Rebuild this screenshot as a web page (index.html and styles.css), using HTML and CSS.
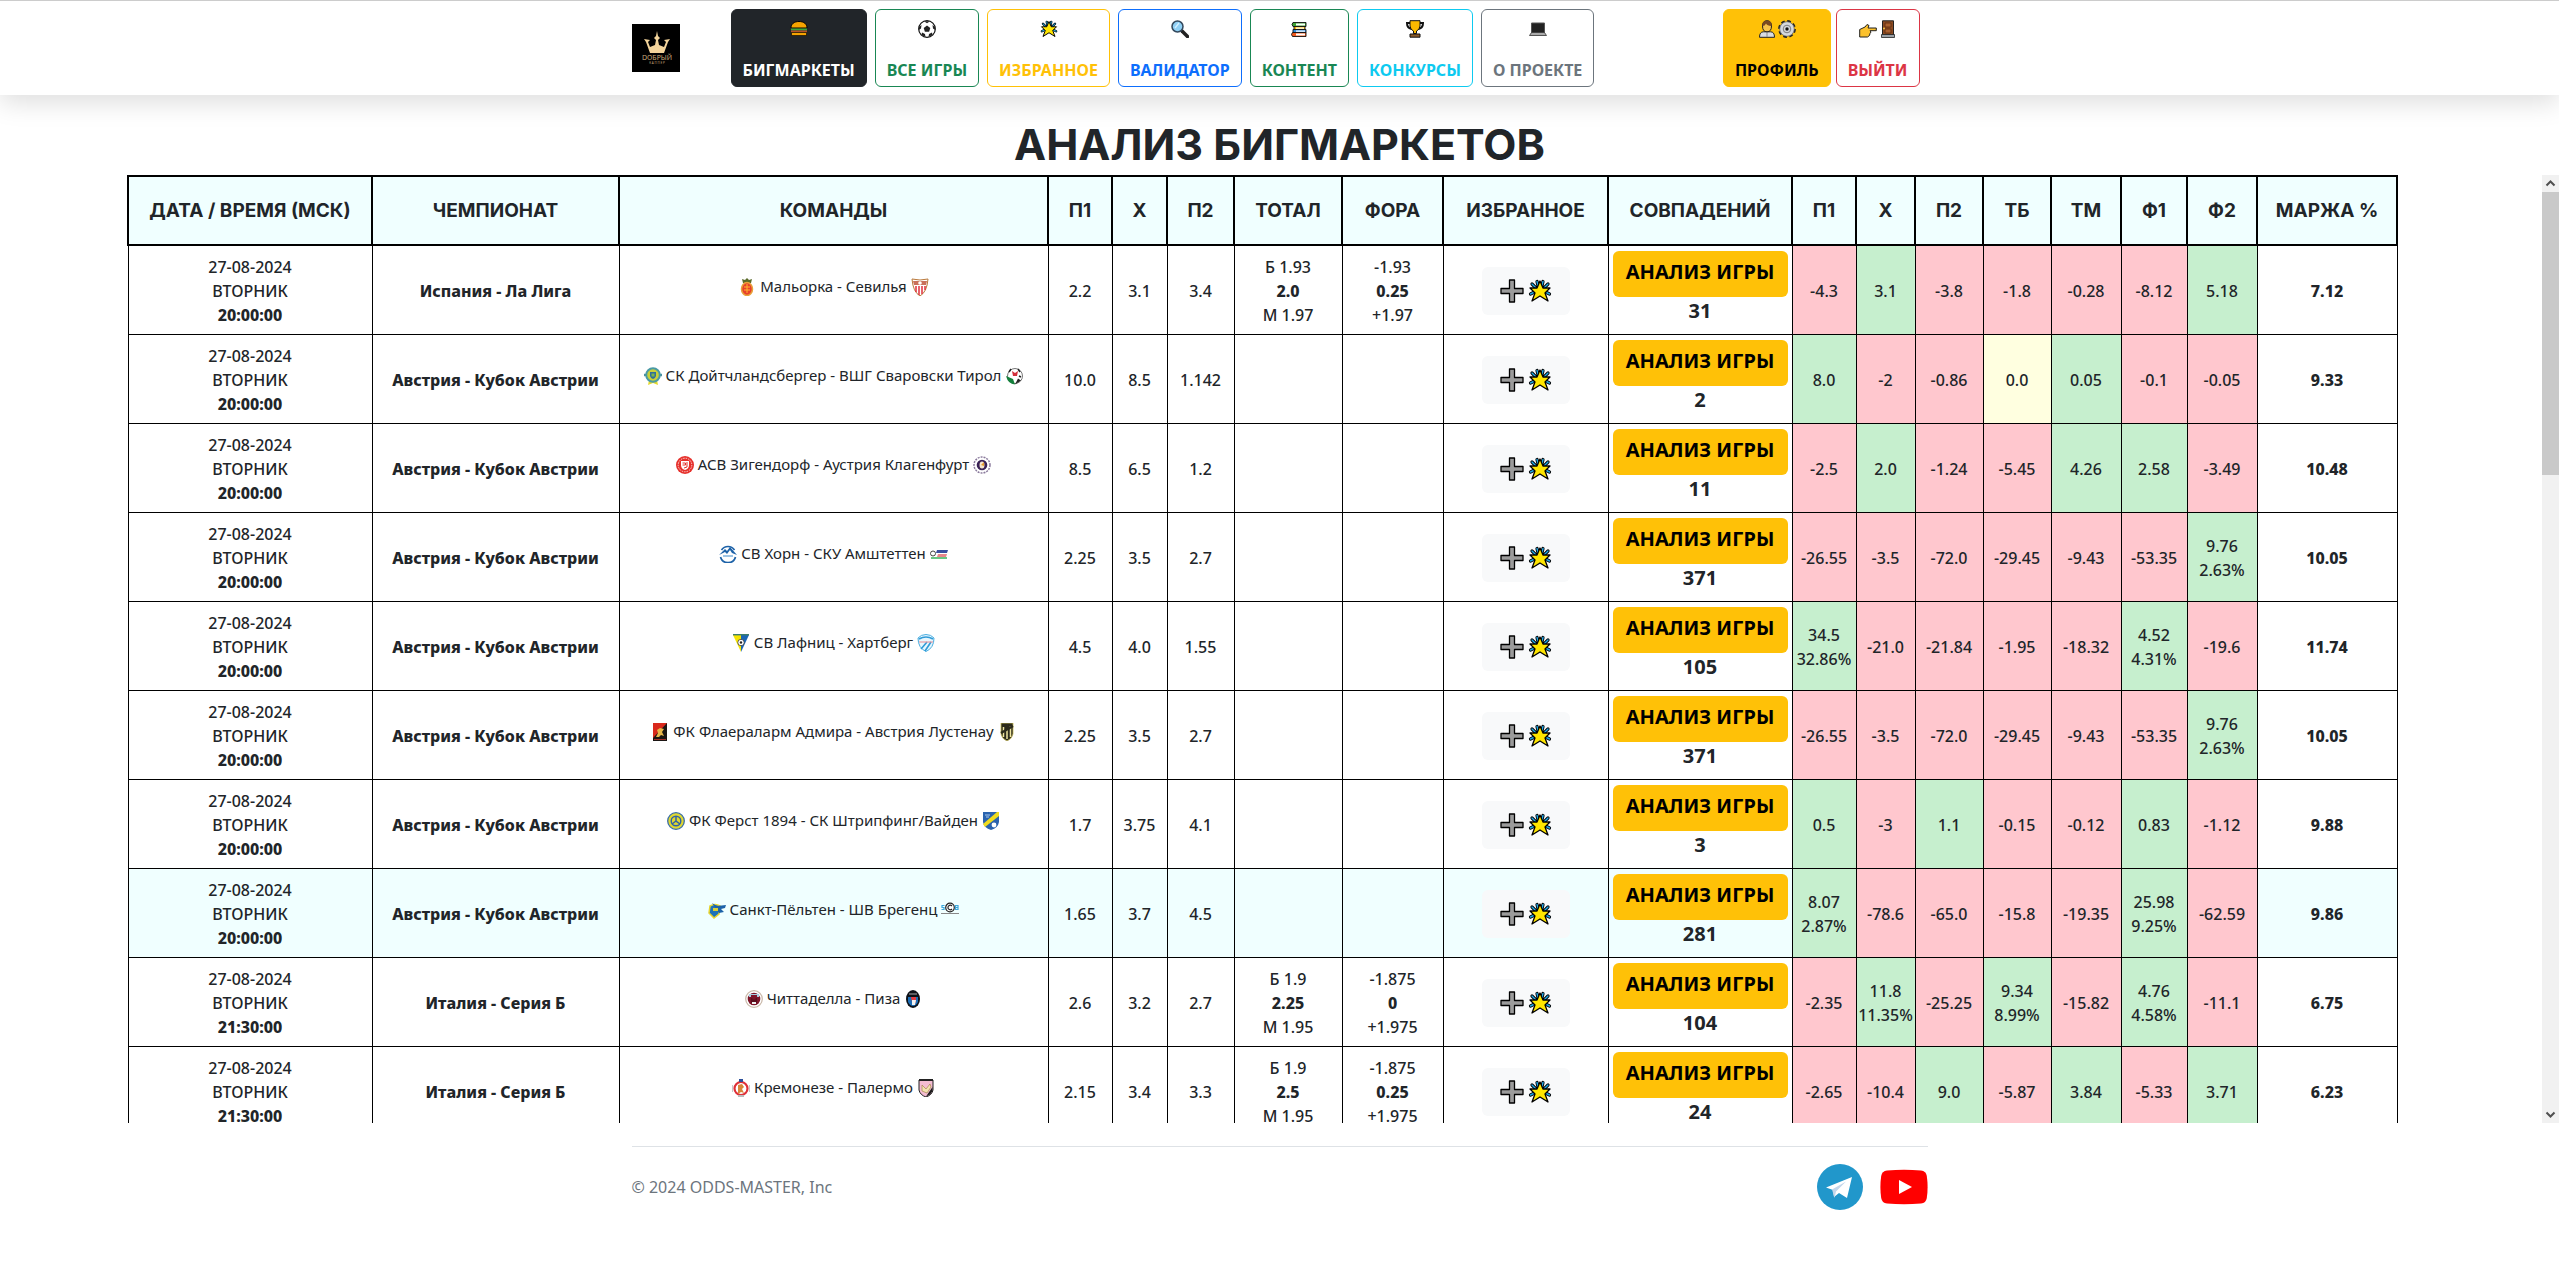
FILE: index.html
```html
<!DOCTYPE html>
<html lang="ru">
<head>
    <meta charset="utf-8">
    <meta name="viewport" content="width=device-width, initial-scale=1">
    <title>Анализ бигмаркетов</title>
    <link rel="stylesheet" href="styles.css">
</head>
<body>
    <svg class="sprite" aria-hidden="true">
        <symbol id="star" viewBox="0 0 24 24">
            <path d="M4 5l4 4M20 5l-4 4M2.500 15l4-2M21.500 15l-4-2M9 2.500l1 4M15 2.500l-1 4" stroke="#000" stroke-width="3.200" stroke-linecap="round"/>
            <path d="M4 5l4 4M20 5l-4 4M2.500 15l4-2M21.500 15l-4-2M9 2.500l1 4M15 2.500l-1 4" stroke="#1fa8e8" stroke-width="1.400" stroke-linecap="round"/>
            <path d="M12 2l3 7h7l-5 5 3 8-8-5-8 5 3-8-5-5h7z" fill="#ffe600" stroke="#000" stroke-width="1.300" stroke-linejoin="round"/>
        </symbol>
        <symbol id="plus" viewBox="0 0 24 24">
            <path d="M9.500 1h5v8.500H23v5h-8.500V23h-5v-8.500H1v-5h8.500z" fill="#9b9b9b" stroke="#000" stroke-width="1.300" stroke-linejoin="round"/>
        </symbol>
    </svg>

    <header class="header">
        <div class="container header-row">
            <a class="logo" href="#" title="Добрый каппер">
                <svg viewBox="0 0 48 48" width="48" height="48">
                    <rect width="48" height="48" fill="#000"/>
                    <g fill="#f3d49b">
                        <path d="M25 7l1 5 2 2-2 2 1 5 5 2 2-5-2-2 6-1-2 3-4 11H18l-4-11-2-3 6 1-2 2 2 5 5-2 1-5-2-2 2-2z"/>
                        <path d="M18 26h14v3H18z"/>
                    </g>
                    <text x="25" y="36" class="logo-name">DОБРЫЙ</text>
                    <text x="25" y="40" class="logo-sub">К А П П Е Р</text>
                </svg>
            </a>
            <nav class="nav">
                <a class="btn btn-dark" href="#">
                    <svg class="icon" viewBox="0 0 18 18"><path d="M1 8c0-4 3-6.500 8-6.500S17 4 17 8z" fill="#f5a300" stroke="#000"/><path d="M1 8.500h16v2H1z" fill="#3fa535"/><path d="M1 10.500h16v2H1z" fill="#b5512a"/><path d="M1.500 12.500h15v3h-15z" fill="#f5a300" stroke="#000" stroke-width=".6"/></svg>
                    <span>БИГМАРКЕТЫ</span>
                </a>
                <a class="btn btn-green" href="#">
                    <svg class="icon" viewBox="0 0 18 18"><circle cx="9" cy="9" r="8.300" fill="#fff" stroke="#111" stroke-width="1.200"/><path d="M9 5.500l3.300 2.400-1.200 3.800H6.900L5.700 7.900zM6 1.200h6L9 3.200zM1 7l2.500-2-.5 3.500L.8 10zM17 7l-2.500-2 .5 3.500 2.200 1.500zM4 12.500l3 1.500.5 3L3.500 15zM14 12.500L11 14l-.5 3 4-2z" fill="#222"/></svg>
                    <span>ВСЕ ИГРЫ</span>
                </a>
                <a class="btn btn-yellow" href="#">
                    <svg class="icon"><use href="#star"/></svg>
                    <span>ИЗБРАННОЕ</span>
                </a>
                <a class="btn btn-blue" href="#">
                    <svg class="icon" viewBox="0 0 18 18"><path d="M11 11l5.500 5.500" stroke="#222" stroke-width="3.500" stroke-linecap="round"/><circle cx="6.500" cy="6.500" r="5.500" fill="#8fd0f5" stroke="#33485c" stroke-width="1.500"/><path d="M4 8l4-5" stroke="#d5f0ff" stroke-width="1.300"/></svg>
                    <span>ВАЛИДАТОР</span>
                </a>
                <a class="btn btn-green" href="#">
                    <svg class="icon" viewBox="0 0 18 18"><g stroke="#111" stroke-width=".9"><path d="M3 2.500h13v4H3q-2-2 0-4z" fill="#3fa535"/><path d="M4 6.500h11v3.200H4z" fill="#fbb900"/><path d="M3 9.500h13v3.200H3z" fill="#2f8de0"/><path d="M2.500 12.500H16v4H2.500q-2-2 0-4z" fill="#f25a1c"/></g><path d="M6 3.500h9v2H6zM6 7.500h8v1.200H6zM6 10.500h9v1.200H6zM6 13.500h9v2H6z" fill="#fff"/></svg>
                    <span>КОНТЕНТ</span>
                </a>
                <a class="btn btn-cyan" href="#">
                    <svg class="icon" viewBox="0 0 18 18"><path d="M4.500 3H1q0 5 4.500 6M13.500 3H17q0 5-4.500 6" fill="none" stroke="#111" stroke-width="2"/><path d="M4 .7h10V6q-.5 4-3.500 5v2.500h-3V11Q4.500 10 4 6z" fill="#fbb900" stroke="#111"/><path d="M4 14h10v3.200H4z" fill="#8a5a2b" stroke="#111"/></svg>
                    <span>КОНКУРСЫ</span>
                </a>
                <a class="btn btn-gray" href="#">
                    <svg class="icon" viewBox="0 0 18 18"><path d="M2.500 3h13v9.500h-13z" fill="#222" stroke="#555"/><path d="M.5 15.500l2-3h13l2 3z" fill="#aaa" stroke="#333" stroke-width=".8"/></svg>
                    <span>О ПРОЕКТЕ</span>
                </a>
            </nav>
            <div class="account">
                <a class="btn btn-profile" href="#">
                    <span class="icons">
                        <svg class="icon" viewBox="0 0 18 18"><path d="M1.500 17.300q0-5.500 4-5.500h7q4 0 4 5.500z" fill="#d9dde2" stroke="#222"/><path d="M9 12v5" stroke="#888"/><path d="M4.500 6Q4.500.7 9 .7T13.500 6q0 5.800-4.500 5.800T4.500 6z" fill="#f7c34a" stroke="#222"/><path d="M4.500 6Q4 .8 9 .8T13.500 6Q9 5.500 8 3.500 7 6 4.500 6z" fill="#7a4a22"/></svg>
                        <svg class="icon" viewBox="0 0 18 18"><circle cx="9" cy="9" r="7.300" fill="none" stroke="#222" stroke-width="3.200" stroke-dasharray="3.400 2.330"/><circle cx="9" cy="9" r="7.300" fill="#d5d8dc" stroke="#555" stroke-width=".7"/><circle cx="9" cy="9" r="3.800" fill="none" stroke="#666" stroke-width=".8"/><circle cx="9" cy="9" r="1.700" fill="#111"/></svg>
                    </span>
                    <span>ПРОФИЛЬ</span>
                </a>
                <a class="btn btn-exit" href="#">
                    <span class="icons">
                        <svg class="icon" viewBox="0 0 18 18"><path d="M.7 17V9.500L6 7l2-2.500 2 1L9 8h8.300v2.700H11l1 1.300-1 1.500-.5 2-2 1.500z" fill="#fbc12d" stroke="#222"/></svg>
                        <svg class="icon" viewBox="0 0 18 18"><path d="M3.500.8h11V15h-11z" fill="#8b4a22" stroke="#222"/><path d="M6 3h6v4H6zM6 9h6v4H6z" fill="#a9602f" stroke="#5a2c10" stroke-width=".8"/><path d="M2.500 14.500h13v3h-13z" fill="#9aa0a6" stroke="#222" stroke-width=".8"/><circle cx="5" cy="8.500" r=".9" fill="#ffd34d"/></svg>
                    </span>
                    <span>ВЫЙТИ</span>
                </a>
            </div>
        </div>
    </header>

    <main>
        <h1>АНАЛИЗ БИГМАРКЕТОВ</h1>
        <div class="scroll">
            <div class="table-wrap">
                <table class="odds">
                    <colgroup>
                        <col class="w-date"><col class="w-league"><col class="w-teams"><col class="w-p1"><col class="w-x"><col class="w-p2"><col class="w-total"><col class="w-fora"><col class="w-fav"><col class="w-match"><col class="w-p1"><col class="w-rx"><col class="w-r"><col class="w-r"><col class="w-tm"><col class="w-f1"><col class="w-tm"><col class="w-margin">
                    </colgroup>
                    <thead>
                        <tr>
                            <th>ДАТА / ВРЕМЯ (МСК)</th><th>ЧЕМПИОНАТ</th><th>КОМАНДЫ</th><th>П1</th><th>Х</th><th>П2</th><th>ТОТАЛ</th><th>ФОРА</th><th>ИЗБРАННОЕ</th><th>СОВПАДЕНИЙ</th><th>П1</th><th>Х</th><th>П2</th><th>ТБ</th><th>ТМ</th><th>Ф1</th><th>Ф2</th><th>МАРЖА %</th>
                        </tr>
                    </thead>
                    <tbody>
                        <tr>
                            <td>27-08-2024<br>ВТОРНИК<br><b>20:00:00</b></td>
                            <td><b>Испания - Ла Лига</b></td>
                            <td class="teams">
                                <svg class="badge" viewBox="0 0 18 18"><path d="M5 5L4 1l3 1 2-2 2 2 3-1-1 4z" fill="#5b6b2a"/><ellipse cx="9" cy="11" rx="5.500" ry="6.500" fill="#e8402a" stroke="#e8a13a" stroke-width="1.500"/><path d="M6 9h6M6 12h6M9 6v9" stroke="#ffb52e"/></svg>
                                Мальорка - Севилья
                                <svg class="badge" viewBox="0 0 18 18"><path d="M1 1q8 2 16 0-1 13-8 17Q2 14 1 1z" fill="#fff" stroke="#b9783a"/><path d="M5 8v6M8 8v9M11 8v8M14 8v4" stroke="#e0303c" stroke-width="1.500"/><path d="M2 3h14l-1 4H3z" fill="#c9705a"/><circle cx="9" cy="5" r="1.800" fill="#fff"/></svg>
                            </td>
                            <td>2.2</td><td>3.1</td><td>3.4</td>
                            <td>Б 1.93<br><b>2.0</b><br>М 1.97</td>
                            <td>-1.93<br><b>0.25</b><br>+1.97</td>
                            <td><button class="fav" type="button" aria-label="В избранное"><svg><use href="#plus"/></svg><svg><use href="#star"/></svg></button></td>
                            <td class="match"><a href="#">АНАЛИЗ ИГРЫ</a>31</td>
                            <td class="neg">-4.3</td><td class="pos">3.1</td><td class="neg">-3.8</td><td class="neg">-1.8</td><td class="neg">-0.28</td><td class="neg">-8.12</td><td class="pos">5.18</td>
                            <td><b>7.12</b></td>
                        </tr>
                        <tr>
                            <td>27-08-2024<br>ВТОРНИК<br><b>20:00:00</b></td>
                            <td><b>Австрия - Кубок Австрии</b></td>
                            <td class="teams">
                                <svg class="badge" viewBox="0 0 18 18"><path d="M5 13l-1 5 5-2 5 2-1-5z" fill="#e6d92c"/><path d="M0 8h18" stroke="#4a8fa0" stroke-width="2.500"/><circle cx="9" cy="8" r="6.800" fill="#c9d03a" stroke="#4a9aa5" stroke-width="2"/><path d="M6 5h6v4q-1 3-3 3T6 9z" fill="#2f6f9a"/><path d="M7.500 6.500h3v3h-3z" fill="#7ab648"/></svg>
                                СК Дойтчландсбергер - ВШГ Сваровски Тирол
                                <svg class="badge" viewBox="0 0 18 18"><circle cx="10" cy="9" r="7.500" fill="#fff" stroke="#777"/><path d="M1 9q2 8 9 8.500L8 12z" fill="#15803c"/><path d="M10 17.500l6-4-3-2z" fill="#222"/><path d="M7 4l3 2 3-2-1 5H8z" fill="#d22f3a"/><path d="M4 5l2-3M15 5l-2-3M16 10l-2-1" stroke="#222" stroke-width="1.500"/></svg>
                            </td>
                            <td>10.0</td><td>8.5</td><td>1.142</td><td></td><td></td>
                            <td><button class="fav" type="button" aria-label="В избранное"><svg><use href="#plus"/></svg><svg><use href="#star"/></svg></button></td>
                            <td class="match"><a href="#">АНАЛИЗ ИГРЫ</a>2</td>
                            <td class="pos">8.0</td><td class="neg">-2</td><td class="neg">-0.86</td><td class="zero">0.0</td><td class="pos">0.05</td><td class="neg">-0.1</td><td class="neg">-0.05</td>
                            <td><b>9.33</b></td>
                        </tr>
                        <tr>
                            <td>27-08-2024<br>ВТОРНИК<br><b>20:00:00</b></td>
                            <td><b>Австрия - Кубок Австрии</b></td>
                            <td class="teams">
                                <svg class="badge" viewBox="0 0 18 18"><circle cx="9" cy="9" r="9" fill="#e6302b"/><circle cx="9" cy="9" r="6.800" fill="none" stroke="#fbd5d3" stroke-width="1" stroke-dasharray="1.500 1"/><path d="M5 5h8v4q0 4-4 5-4-1-4-5z" fill="#fff"/><path d="M6.500 7h3v2h-3M11 6v5l-3 1" fill="none" stroke="#e6302b"/></svg>
                                АСВ Зигендорф - Аустрия Клагенфурт
                                <svg class="badge" viewBox="0 0 18 18"><circle cx="9" cy="9" r="8" fill="#fff" stroke="#8a7a9c" stroke-width="1.500" stroke-dasharray="2 1"/><circle cx="9" cy="9" r="5.300" fill="#3a2255"/><ellipse cx="9" cy="9" rx="2.500" ry="3.500" fill="#f4e6d0"/><path d="M8 9l3-3v4z" fill="#e79a2a"/></svg>
                            </td>
                            <td>8.5</td><td>6.5</td><td>1.2</td><td></td><td></td>
                            <td><button class="fav" type="button" aria-label="В избранное"><svg><use href="#plus"/></svg><svg><use href="#star"/></svg></button></td>
                            <td class="match"><a href="#">АНАЛИЗ ИГРЫ</a>11</td>
                            <td class="neg">-2.5</td><td class="pos">2.0</td><td class="neg">-1.24</td><td class="neg">-5.45</td><td class="pos">4.26</td><td class="pos">2.58</td><td class="neg">-3.49</td>
                            <td><b>10.48</b></td>
                        </tr>
                        <tr>
                            <td>27-08-2024<br>ВТОРНИК<br><b>20:00:00</b></td>
                            <td><b>Австрия - Кубок Австрии</b></td>
                            <td class="teams">
                                <svg class="badge" viewBox="0 0 18 18"><path d="M2.500 5a7.800 7.800 0 0 1 13 0M1.500 12a7.800 7.800 0 0 0 15 0" fill="none" stroke="#1d62a8" stroke-width="1.700"/><path d="M0 10l6-6 2 2 3-4 7 8-5-2-2-3-3 4-2-2z" fill="#1d62a8"/><path d="M4 11h10" stroke="#7fb2dc" stroke-width="1.500"/></svg>
                                СВ Хорн - СКУ Амштеттен
                                <svg class="badge" viewBox="0 0 18 18"><circle cx="3" cy="8.500" r="2.500" fill="#fff" stroke="#444"/><path d="M7 5h11l-1 3H6z" fill="#3a4fa0"/><path d="M8 9h9l-1 3H7z" fill="#e8868c"/><path d="M1 13h16" stroke="#37b35a" stroke-width="1.500"/></svg>
                            </td>
                            <td>2.25</td><td>3.5</td><td>2.7</td><td></td><td></td>
                            <td><button class="fav" type="button" aria-label="В избранное"><svg><use href="#plus"/></svg><svg><use href="#star"/></svg></button></td>
                            <td class="match"><a href="#">АНАЛИЗ ИГРЫ</a>371</td>
                            <td class="neg">-26.55</td><td class="neg">-3.5</td><td class="neg">-72.0</td><td class="neg">-29.45</td><td class="neg">-9.43</td><td class="neg">-53.35</td><td class="pos">9.76<br>2.63%</td>
                            <td><b>10.05</b></td>
                        </tr>
                        <tr>
                            <td>27-08-2024<br>ВТОРНИК<br><b>20:00:00</b></td>
                            <td><b>Австрия - Кубок Австрии</b></td>
                            <td class="teams">
                                <svg class="badge" viewBox="0 0 18 18"><path d="M1 1h8v17z" fill="#f6e400"/><path d="M9 1h8L9 18z" fill="#1c66b5"/><path d="M1 .7h16" stroke="#3d7d6a" stroke-width="1.400"/><circle cx="9" cy="8.500" r="3.200" fill="#fff" stroke="#222" stroke-width=".7"/><circle cx="9" cy="8.500" r="1.200" fill="#222"/></svg>
                                СВ Лафниц - Хартберг
                                <svg class="badge" viewBox="0 0 18 18"><path d="M1 4q3-3.500 8-3.500T17 4q0 10-8 13.500Q1 14 1 4z" fill="#e8f6fd" stroke="#4aaee0"/><path d="M2 5q7-4 14 0M4 15l6-7M8 17l6-9" stroke="#2f9bd8" stroke-width="1.600" fill="none"/><path d="M2 8h14" stroke="#e98a92"/></svg>
                            </td>
                            <td>4.5</td><td>4.0</td><td>1.55</td><td></td><td></td>
                            <td><button class="fav" type="button" aria-label="В избранное"><svg><use href="#plus"/></svg><svg><use href="#star"/></svg></button></td>
                            <td class="match"><a href="#">АНАЛИЗ ИГРЫ</a>105</td>
                            <td class="pos">34.5<br>32.86%</td><td class="neg">-21.0</td><td class="neg">-21.84</td><td class="neg">-1.95</td><td class="neg">-18.32</td><td class="pos">4.52<br>4.31%</td><td class="neg">-19.6</td>
                            <td><b>11.74</b></td>
                        </tr>
                        <tr>
                            <td>27-08-2024<br>ВТОРНИК<br><b>20:00:00</b></td>
                            <td><b>Австрия - Кубок Австрии</b></td>
                            <td class="teams">
                                <svg class="badge" viewBox="0 0 18 18"><path d="M2 0h14v18H2z" fill="#1b1613"/><path d="M2 0h14L2 15z" fill="#d9291c"/><path d="M5 14l2-4-1-3 3-2 4 1-2 3 2 4-3-1-2 2z" fill="#e8b84a"/><path d="M3 16.500h12" stroke="#a2312a"/></svg>
                                ФК Флаераларм Адмира - Австрия Лустенау
                                <svg class="badge" viewBox="0 0 18 18"><path d="M3 0h12v11q-1 5-6 7-5-2-6-7z" fill="#2b2a1c" stroke="#c8bb5c" stroke-width=".8"/><path d="M5.500 4v10M9 6v10M12.500 3v11" stroke="#efe6a0" stroke-width="1.500"/><path d="M3 10l12-7" stroke="#2b2a1c" stroke-width="2.500"/></svg>
                            </td>
                            <td>2.25</td><td>3.5</td><td>2.7</td><td></td><td></td>
                            <td><button class="fav" type="button" aria-label="В избранное"><svg><use href="#plus"/></svg><svg><use href="#star"/></svg></button></td>
                            <td class="match"><a href="#">АНАЛИЗ ИГРЫ</a>371</td>
                            <td class="neg">-26.55</td><td class="neg">-3.5</td><td class="neg">-72.0</td><td class="neg">-29.45</td><td class="neg">-9.43</td><td class="neg">-53.35</td><td class="pos">9.76<br>2.63%</td>
                            <td><b>10.05</b></td>
                        </tr>
                        <tr>
                            <td>27-08-2024<br>ВТОРНИК<br><b>20:00:00</b></td>
                            <td><b>Австрия - Кубок Австрии</b></td>
                            <td class="teams">
                                <svg class="badge" viewBox="0 0 18 18"><circle cx="9" cy="9" r="8.300" fill="#e0d830" stroke="#3a6ea8" stroke-width="1.300"/><circle cx="9" cy="9" r="4.800" fill="#e0d830" stroke="#2f62a5" stroke-width="1.400"/><path d="M9 5v4l4 3M9 9l-4 3" stroke="#2f62a5" stroke-width="1.500" fill="none"/></svg>
                                ФК Ферст 1894 - СК Штрипфинг/Вайден
                                <svg class="badge" viewBox="0 0 18 18"><path d="M1 0h16v10q-1 6-8 8-7-2-8-8z" fill="#2a63ae"/><path d="M1 12L15 0h2v4L3 15z" fill="#f0dc1e"/><circle cx="12" cy="13" r="2.400" fill="#fff"/><path d="M3 3h5M4 5h3" stroke="#a9c8ea"/></svg>
                            </td>
                            <td>1.7</td><td>3.75</td><td>4.1</td><td></td><td></td>
                            <td><button class="fav" type="button" aria-label="В избранное"><svg><use href="#plus"/></svg><svg><use href="#star"/></svg></button></td>
                            <td class="match"><a href="#">АНАЛИЗ ИГРЫ</a>3</td>
                            <td class="pos">0.5</td><td class="neg">-3</td><td class="pos">1.1</td><td class="neg">-0.15</td><td class="neg">-0.12</td><td class="pos">0.83</td><td class="neg">-1.12</td>
                            <td><b>9.88</b></td>
                        </tr>
                        <tr class="current">
                            <td>27-08-2024<br>ВТОРНИК<br><b>20:00:00</b></td>
                            <td><b>Австрия - Кубок Австрии</b></td>
                            <td class="teams">
                                <svg class="badge" viewBox="0 0 18 18"><path d="M2 5q5-3 10 0l-1 8-5 4-5-5z" fill="#1c72b8" stroke="#e8d530" stroke-width="1.500"/><path d="M4 2l5 3 9-1-1 3-4 1 3 3-5 1z" fill="#1c62a8"/><path d="M5 7h5v3H5z" fill="#d7cf36"/></svg>
                                Санкт-Пёльтен - ШВ Брегенц
                                <svg class="badge" viewBox="0 0 18 18"><circle cx="9" cy="6.500" r="4.300" fill="#fff" stroke="#222" stroke-width="1.200"/><path d="M11 5a2.300 2.300 0 1 0 0 3" fill="none" stroke="#222" stroke-width="1.200"/><path d="M3.500 4.500H1v2h2v2H.5M14.500 4.500h2.500v4h-2.500zM14.500 6.500H17" fill="none" stroke="#3aa7dc" stroke-width="1.200"/><path d="M0 12.500h18" stroke="#888"/></svg>
                            </td>
                            <td>1.65</td><td>3.7</td><td>4.5</td><td></td><td></td>
                            <td><button class="fav" type="button" aria-label="В избранное"><svg><use href="#plus"/></svg><svg><use href="#star"/></svg></button></td>
                            <td class="match"><a href="#">АНАЛИЗ ИГРЫ</a>281</td>
                            <td class="pos">8.07<br>2.87%</td><td class="neg">-78.6</td><td class="neg">-65.0</td><td class="neg">-15.8</td><td class="neg">-19.35</td><td class="pos">25.98<br>9.25%</td><td class="neg">-62.59</td>
                            <td><b>9.86</b></td>
                        </tr>
                        <tr>
                            <td>27-08-2024<br>ВТОРНИК<br><b>21:30:00</b></td>
                            <td><b>Италия - Серия Б</b></td>
                            <td class="teams">
                                <svg class="badge" viewBox="0 0 18 18"><circle cx="9" cy="9" r="8.300" fill="#fff" stroke="#c9b8a8" stroke-width="1.200"/><circle cx="9" cy="9" r="6.300" fill="#7d1428"/><path d="M4 4h10v3h-2V5H6v2H4z" fill="#a9cde0"/><path d="M6 8h1.500v1.500h3V8H12v5H6z" fill="#5a0f1e"/><path d="M7 12h4v2H7z" fill="#eee"/></svg>
                                Читтаделла - Пиза
                                <svg class="badge" viewBox="0 0 18 18"><ellipse cx="9" cy="9" rx="7" ry="9" fill="#0d1118"/><path d="M4 7h10v5q-2 4-5 4t-5-4z" fill="#1c6fb8"/><path d="M7 7h5v5q-2 3-4 0z" fill="#e23b41"/><path d="M8 10h4l-1 5H8z" fill="#f2f2f2"/><path d="M5 4h8" stroke="#aaa"/></svg>
                            </td>
                            <td>2.6</td><td>3.2</td><td>2.7</td>
                            <td>Б 1.9<br><b>2.25</b><br>М 1.95</td>
                            <td>-1.875<br><b>0</b><br>+1.975</td>
                            <td><button class="fav" type="button" aria-label="В избранное"><svg><use href="#plus"/></svg><svg><use href="#star"/></svg></button></td>
                            <td class="match"><a href="#">АНАЛИЗ ИГРЫ</a>104</td>
                            <td class="neg">-2.35</td><td class="pos">11.8<br>11.35%</td><td class="neg">-25.25</td><td class="pos">9.34<br>8.99%</td><td class="neg">-15.82</td><td class="pos">4.76<br>4.58%</td><td class="neg">-11.1</td>
                            <td><b>6.75</b></td>
                        </tr>
                        <tr>
                            <td>27-08-2024<br>ВТОРНИК<br><b>21:30:00</b></td>
                            <td><b>Италия - Серия Б</b></td>
                            <td class="teams">
                                <svg class="badge" viewBox="0 0 18 18"><path d="M0 6v7M18 6v7" stroke="#c8c8c8" stroke-width="2"/><circle cx="9" cy="9.500" r="6.500" fill="#fff" stroke="#df3038" stroke-width="2.200"/><path d="M7 0h4v3H7z" fill="#2c4f9a"/><path d="M6 6l4-1 2 3-2 2 2 4-3-1-3 2z" fill="#d8863a"/><path d="M6 17h6" stroke="#bbb" stroke-width="2"/></svg>
                                Кремонезе - Палермо
                                <svg class="badge" viewBox="0 0 18 18"><path d="M2 1h14v10q-1 5-7 7-6-2-7-7z" fill="#f4bcd2" stroke="#222"/><path d="M15.500 8v4q-2 4-6.500 5.500z" fill="#1a1a1a"/><path d="M2 1h14" stroke="#222" stroke-width="2"/><path d="M5 6l4 4 4-5 1 3-4 6-5-2z" fill="#f3e3b0" stroke="#9a7a3a" stroke-width=".6"/></svg>
                            </td>
                            <td>2.15</td><td>3.4</td><td>3.3</td>
                            <td>Б 1.9<br><b>2.5</b><br>М 1.95</td>
                            <td>-1.875<br><b>0.25</b><br>+1.975</td>
                            <td><button class="fav" type="button" aria-label="В избранное"><svg><use href="#plus"/></svg><svg><use href="#star"/></svg></button></td>
                            <td class="match"><a href="#">АНАЛИЗ ИГРЫ</a>24</td>
                            <td class="neg">-2.65</td><td class="neg">-10.4</td><td class="pos">9.0</td><td class="neg">-5.87</td><td class="pos">3.84</td><td class="neg">-5.33</td><td class="pos">3.71</td>
                            <td><b>6.23</b></td>
                        </tr>
                    </tbody>
                </table>
            </div>
            <div class="scrollbar" aria-hidden="true">
                <svg viewBox="0 0 17 17"><path d="M4.500 10.500l4-4 4 4" fill="none" stroke="#505050" stroke-width="2"/></svg>
                <div class="track"><div class="thumb"></div></div>
                <svg viewBox="0 0 17 17"><path d="M4.500 6.500l4 4 4-4" fill="none" stroke="#505050" stroke-width="2"/></svg>
            </div>
        </div>
    </main>

    <footer class="container">
        <div class="footer">
            <p>© 2024 ODDS-MASTER, Inc</p>
            <div class="social">
                <a href="#" aria-label="Telegram">
                    <svg viewBox="0 0 48 48"><circle cx="24" cy="24" r="23" fill="#2197cb"/><path d="M10 24.500L36 14l-5 21-8-5-5 4-1-7z" fill="#fff"/><path d="M16 26.500l14-8-10 10-1.500 6.500z" fill="#c3d6ea"/></svg>
                </a>
                <a href="#" aria-label="YouTube">
                    <svg viewBox="0 0 48 48"><path d="M7 7.500q17-1.500 34 0 5 .5 5.800 5.500 1.600 11 0 22-.8 5-5.800 5.500-17 1.500-34 0-5-.5-5.800-5.500-1.600-11 0-22Q2 8 7 7.500z" fill="#f00"/><path d="M19 17v14l13-7z" fill="#fff"/></svg>
                </a>
            </div>
        </div>
    </footer>
</body>
</html>
```
FILE: styles.css
```css
* {
    box-sizing: border-box;
}
body {
    margin: 0;
    font-family: "Noto Sans", sans-serif;
    font-size: 16px;
    line-height: 24px;
    color: #212529;
    background-color: #fff;
}
a {
    text-decoration: none;
}
.sprite {
    display: none;
}
.container {
    max-width: 1320px;
    margin: 0 auto;
    padding: 0 12px;
}

/* header */
.header {
    position: relative;
    padding: 8px 0;
    border-top: 1px solid #ccc;
    background-color: #fff;
    box-shadow: 0 8px 24px rgba(0, 0, 0, 0.13);
}
.header-row {
    display: flex;
    align-items: center;
    padding-right: 20px;
}
.logo {
    display: flex;
    margin-right: 51px;
}
.logo-name {
    font-size: 7px;
    fill: #c9a878;
    text-anchor: middle;
}
.logo-sub {
    font-size: 3px;
    fill: #c9a878;
    text-anchor: middle;
}
.nav {
    display: flex;
    gap: 8px;
}
.account {
    display: flex;
    gap: 5px;
    margin-left: auto;
}
.btn {
    display: flex;
    flex-direction: column;
    justify-content: space-between;
    align-items: center;
    height: 78px;
    padding: 10px 11px 4px;
    border: 1px solid;
    border-radius: 6px;
    font-weight: bold;
}
.icons {
    display: flex;
    gap: 2px;
}
.icon {
    width: 18px;
    height: 18px;
}
.btn-dark {
    color: #fff;
    background-color: #212529;
    border-color: #212529;
}
.btn-green {
    color: #198754;
}
.btn-yellow {
    color: #ffc107;
}
.btn-blue {
    color: #0d6efd;
}
.btn-cyan {
    color: #0dcaf0;
}
.btn-gray {
    color: #6c757d;
}
.btn-profile {
    color: #000;
    background-color: #ffc107;
    border-color: #ffc107;
}
.btn-exit {
    color: #dc3545;
}

h1 {
    margin: 0;
    padding: 25px 0 7px;
    font-family: Inter, sans-serif;
    font-size: 43px;
    line-height: 48px;
    font-weight: bold;
    text-align: center;
}

/* table */
.scroll {
    display: flex;
    height: 74vh;
}
.table-wrap {
    flex: 1;
    padding: 0 147px 0 127px;
    overflow-y: auto;
    scrollbar-width: none;
}
.odds {
    width: 100%;
    table-layout: fixed;
    border-collapse: collapse;
    text-align: center;
    font-weight: 500;
}
.odds th {
    height: 69px;
    padding: 0;
    border: 2px solid #000;
    background-color: #f0ffff;
    font-family: Inter, sans-serif;
    font-size: 19px;
    font-weight: bold;
}
.odds td {
    height: 89px;
    padding: 9px 0 7px;
    border: 1px solid #000;
}
.odds b {
    font-weight: 800;
}
.odds .teams {
    padding-bottom: 17px;
    font-size: 15px;
    font-weight: normal;
}
.badge {
    width: 18px;
    height: 18px;
    vertical-align: -4px;
}
.current td {
    background-color: #f0ffff;
}
.odds .neg {
    background-color: #ffc7ce;
}
.odds .pos {
    background-color: #c6efce;
}
.odds .zero {
    background-color: #ffffe0;
}
.fav {
    padding: 12px 18px;
    border: none;
    border-radius: 6px;
    background-color: #f8f9fa;
    vertical-align: middle;
    cursor: pointer;
}
.fav svg {
    width: 24px;
    height: 24px;
    vertical-align: middle;
}
.fav svg + svg {
    margin-left: 4px;
}
.odds .match {
    padding: 5px 4px 0;
    font-size: 20px;
    font-weight: bold;
    vertical-align: top;
}
.match a {
    display: block;
    margin-bottom: 2px;
    padding: 6px 0 10px;
    border-radius: 6px;
    background-color: #ffc107;
    color: #000;
    line-height: 30px;
}
.w-date { width: 244px; }
.w-league { width: 247px; }
.w-teams { width: 429px; }
.w-p1 { width: 64px; }
.w-x { width: 55px; }
.w-p2 { width: 67px; }
.w-total { width: 108px; }
.w-fora { width: 101px; }
.w-fav { width: 165px; }
.w-match { width: 184px; }
.w-rx { width: 59px; }
.w-r { width: 68px; }
.w-tm { width: 70px; }
.w-f1 { width: 66px; }
.w-margin { width: 140px; }

.scrollbar {
    display: flex;
    flex-direction: column;
    width: 17px;
    background-color: #f1f1f1;
}
.scrollbar svg {
    height: 17px;
}
.track {
    flex: 1;
}
.thumb {
    height: 31%;
    background-color: #c9c9c9;
}

/* footer */
.footer {
    display: flex;
    justify-content: space-between;
    align-items: center;
    margin-top: 23px;
    padding: 16px 0;
    border-top: 1px solid #dee2e6;
    color: #6c757d;
}
.footer p {
    margin: 0;
}
.social {
    display: flex;
    gap: 16px;
}
.social svg {
    display: block;
    width: 48px;
    height: 48px;
}
```
